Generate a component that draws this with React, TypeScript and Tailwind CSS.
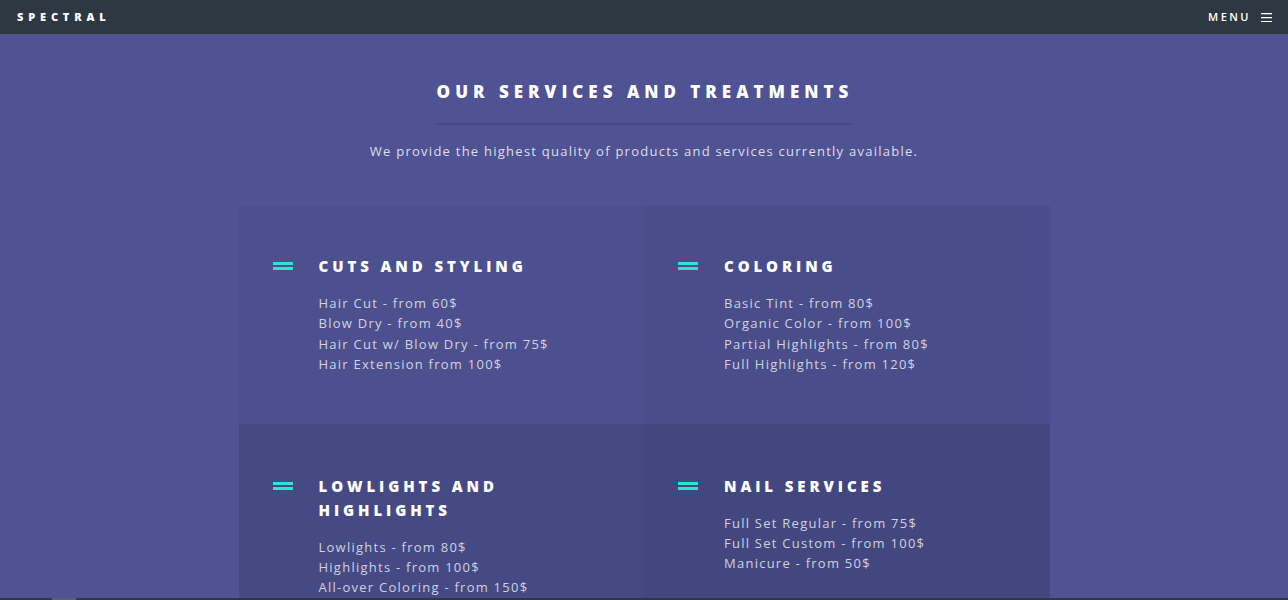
import React from "react";

const features = [
  {
    title: "CUTS AND STYLING",
    items: ["Hair Cut - from 60$", "Blow Dry - from 40$", "Hair Cut w/ Blow Dry - from 75$", "Hair Extension from 100$"],
    cls: "bg-[rgba(0,0,0,0.035)] pt-[48px] pb-[49px]",
  },
  {
    title: "COLORING",
    items: ["Basic Tint - from 80$", "Organic Color - from 100$", "Partial Highlights - from 80$", "Full Highlights - from 120$"],
    cls: "bg-[rgba(0,0,0,0.07)] pt-[48px] pb-[49px]",
  },
  {
    title: "LOWLIGHTS AND HIGHLIGHTS",
    items: ["Lowlights - from 80$", "Highlights - from 100$", "All-over Coloring - from 150$"],
    cls: "bg-[rgba(0,0,0,0.105)] pt-[50px] pb-[49px]",
  },
  {
    title: "NAIL SERVICES",
    items: ["Full Set Regular - from 75$", "Full Set Custom - from 100$", "Manicure - from 50$"],
    cls: "bg-[rgba(0,0,0,0.14)] pt-[50px] pb-[49px]",
  },
];

function Icon() {
  return (
    <div className="flex flex-col gap-[2px] w-[20px] pt-[8px] shrink-0">
      <div className="h-[3px] bg-[#2ee3cf]" />
      <div className="h-[3px] bg-[#2ee3cf]" />
    </div>
  );
}

export default function App() {
  return (
    <div className="min-h-screen bg-[#4f5394] text-white font-['Open_Sans',sans-serif]">
      <header className="h-[34px] bg-[#2e3842] flex items-center justify-between pl-[17px] pr-[16px]">
        <div className="text-[11px] font-extrabold tracking-[4.85px] text-white">SPECTRAL</div>
        <div className="flex items-center gap-[10px]">
          <span className="text-[11px] font-semibold tracking-[0.225em] text-white">MENU</span>
          <svg width="11" height="10" viewBox="0 0 11 10" className="mt-[-1px]">
            <rect x="0" y="1" width="11" height="1.3" fill="#ffffff" />
            <rect x="0" y="5" width="11" height="1.3" fill="#ffffff" />
            <rect x="0" y="9" width="11" height="1" fill="#ffffff" />
          </svg>
        </div>
      </header>

      <section className="pt-[46px] flex flex-col items-center">
        <h2 className="text-[17px] leading-[24px] font-extrabold tracking-[5px] pl-[2px] pb-[19px] border-b-2 border-[rgba(0,0,0,0.1)] text-white">
          OUR SERVICES AND TREATMENTS
        </h2>
        <p className="mt-[16px] text-[13px] leading-[20px] tracking-[1.25px] text-[rgba(255,255,255,0.82)]">
          We provide the highest quality of products and services currently available.
        </p>

        <div className="mt-[45px] w-[811px] grid grid-cols-2">
          {features.map((f) => (
            <div key={f.title} className={`${f.cls} pl-[34px] pr-[40px] flex gap-[26px]`}>
              <Icon />
              <div className="flex flex-col">
                <h3 className="text-[15px] leading-[24px] font-extrabold tracking-[3.9px] text-white max-w-[260px]">
                  {f.title}
                </h3>
                <ul className="mt-[15px] flex flex-col">
                  {f.items.map((it) => (
                    <li key={it} className="text-[13px] leading-[20.4px] tracking-[1.25px] text-[rgba(255,255,255,0.75)]">
                      {it}
                    </li>
                  ))}
                </ul>
              </div>
            </div>
          ))}
        </div>
      </section>
      <div className="fixed left-0 right-0 bottom-0 h-[2px] bg-[#2e3842]">
        <div className="ml-[52px] w-[24px] h-full bg-[#5a6070]" />
      </div>
    </div>
  );
}
